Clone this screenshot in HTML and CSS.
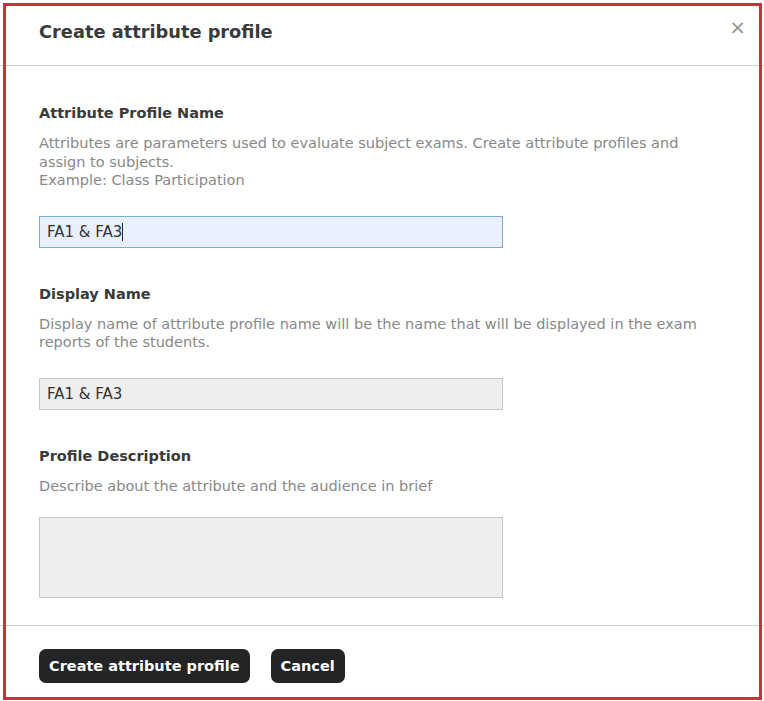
FILE: index.html
```html
<!DOCTYPE html>
<html lang="en">
<head>
<meta charset="utf-8">
<title>Create attribute profile</title>
<link rel="stylesheet" href="styles.css">
</head>
<body>
<div class="modal">
  <div class="modal-header">
    <h2 class="modal-title">Create attribute profile</h2>
    <button class="close" type="button" aria-label="Close">&times;</button>
  </div>
  <div class="modal-body">
    <div class="field field-first">
      <label class="label">Attribute Profile Name</label>
      <p class="help">Attributes are parameters used to evaluate subject exams. Create attribute profiles and assign to subjects.<br>Example: Class Participation</p>
      <div class="input input-active">FA1 &amp; FA3<span class="caret"></span></div>
    </div>
    <div class="field">
      <label class="label">Display Name</label>
      <p class="help">Display name of attribute profile name will be the name that will be displayed in the exam reports of the students.</p>
      <div class="input">FA1 &amp; FA3</div>
    </div>
    <div class="field">
      <label class="label">Profile Description</label>
      <p class="help">Describe about the attribute and the audience in brief</p>
      <div class="input textarea"></div>
    </div>
  </div>
  <div class="modal-footer">
    <button class="btn" type="button">Create attribute profile</button>
    <button class="btn" type="button">Cancel</button>
  </div>
  <div class="frame"></div>
</div>
</body>
</html>
```

FILE: styles.css
```css
* { box-sizing: border-box; }
html, body { margin: 0; padding: 0; background: #fff; }
body {
  font-family: "DejaVu Sans", Verdana, sans-serif;
  color: #333;
  font-size: 15px;
}
.modal {
  position: relative;
  width: 764px;
  height: 701px;
  background: #fff;
}
.frame {
  position: absolute;
  left: 3px;
  top: 3px;
  width: 759px;
  height: 697px;
  border: 3px solid #c8303c;
  pointer-events: none;
}
.modal-header {
  height: 66px;
  border-bottom: 1px solid #cfcfcf;
  display: flex;
  align-items: center;
  justify-content: space-between;
  padding: 0 18px 2px 39px;
}
.modal-title {
  margin: 0;
  font-size: 17.8px;
  font-weight: bold;
  color: #3a3a3a;
  line-height: 24px;
}
.close {
  border: 0;
  background: none;
  padding: 0;
  font-family: "DejaVu Sans", sans-serif;
  font-size: 20px;
  line-height: 20px;
  color: #939393;
  align-self: flex-start;
  margin-top: 17px;
}
.modal-body {
  padding: 37px 39px 0 39px;
  height: 560px;
  border-bottom: 1px solid #cfcfcf;
}
.field { margin-top: 36px; }
.field-first { margin-top: 0; }
.label {
  display: block;
  font-weight: bold;
  font-size: 14.5px;
  line-height: 20px;
  color: #3a3a3a;
}
.help {
  margin: 11px 0 0 0;
  font-size: 14.5px;
  line-height: 18.5px;
  color: #888;
}
.input {
  margin-top: 26px;
  width: 464px;
  height: 32px;
  border: 1px solid #c8c8c8;
  background: #eeeeee;
  padding: 0 7px;
  font-size: 15px;
  line-height: 30px;
  color: #333;
}
.input-active {
  background: #e8f0fe;
  border-color: #7aaecb;
}
.caret {
  display: inline-block;
  width: 1px;
  height: 18px;
  background: #222;
  vertical-align: -4px;
}
.textarea {
  height: 81px;
  margin-top: 22px;
}
.modal-footer {
  display: flex;
  gap: 21px;
  padding: 23px 39px 0 39px;
}
.btn {
  font-family: inherit;
  font-size: 14.5px;
  font-weight: bold;
  color: #fff;
  background: #222426;
  border: 0;
  border-radius: 7px;
  height: 34px;
  padding: 0 10px;
}
```
